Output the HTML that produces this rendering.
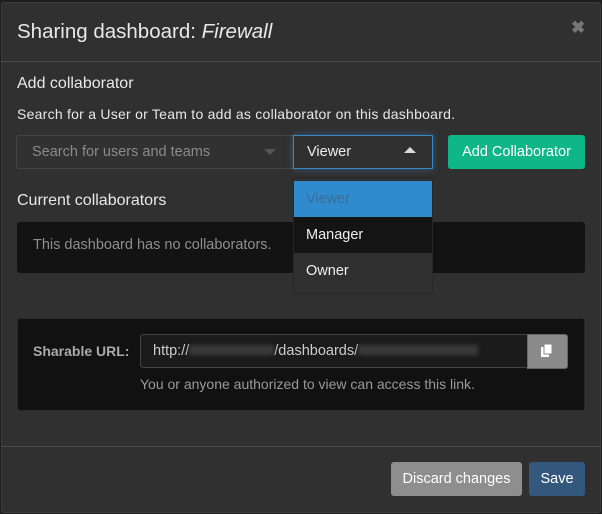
<!DOCTYPE html><html><head><style>
*{box-sizing:border-box;margin:0;padding:0}
body{width:602px;height:514px;background:#1e1e1e;font-family:"Liberation Sans",sans-serif;position:relative;overflow:hidden}
.m{position:absolute;left:1px;top:2px;width:600px;height:511px;background:#303030;border:1px solid #3c3c3c;border-radius:3px}
.a{position:absolute;white-space:nowrap}
.t{color:#e8e8e8}
</style></head><body>
<div class="m"></div>
<div class="a t" style="left:17px;top:20px;font-size:20.5px">Sharing dashboard: <i>Firewall</i></div>
<div class="a" style="left:571px;top:18px;font-size:17px;color:#777;font-weight:bold">✖</div>
<div class="a" style="left:1px;top:61px;width:600px;height:1px;background:#4a4a4a"></div>
<div class="a t" style="left:17px;top:75px;font-size:16px">Add collaborator</div>
<div class="a t" style="left:17px;top:106px;font-size:14px;letter-spacing:0.25px">Search for a User or Team to add as collaborator on this dashboard.</div>
<div class="a" style="left:16px;top:135px;width:278px;height:34px;border:1px solid #444;border-radius:3px 0 0 3px;background:#313131;color:#8a8a8a;font-size:14.5px;padding:8px 0 0 15px">Search for users and teams</div>
<div class="a" style="left:264px;top:149px;width:0;height:0;border-left:6px solid transparent;border-right:6px solid transparent;border-top:6px solid #555"></div>
<div class="a" style="left:293px;top:135px;width:140px;height:34px;border:1px solid #3a87c8;box-shadow:0 0 6px rgba(60,140,210,.5);background:#303030;color:#eee;font-size:14.5px;padding:8px 0 0 13px">Viewer</div>
<div class="a" style="left:404px;top:147px;width:0;height:0;border-left:6px solid transparent;border-right:6px solid transparent;border-bottom:6px solid #ddd"></div>
<div class="a" style="left:448px;top:135px;width:137px;height:34px;background:#0fb688;border-radius:3px;color:#fff;font-size:14.5px;text-align:center;line-height:34px">Add Collaborator</div>
<div class="a t" style="left:17px;top:192px;font-size:16px">Current collaborators</div>
<div class="a" style="left:17px;top:222px;width:568px;height:51px;background:#131313;border-radius:3px;color:#8e8e8e;font-size:14.5px;padding:15px 0 0 16px">This dashboard has no collaborators.</div>
<div class="a" style="left:293px;top:177px;width:140px;height:117px;background:#303030;border:1px solid #282828;border-radius:3px"></div>
<div class="a" style="left:294px;top:181px;width:138px;height:36px;background:#2f8bce;color:#3d6c98;font-size:14.5px;padding:10px 0 0 12px">Viewer</div>
<div class="a" style="left:294px;top:217px;width:138px;height:36px;background:#141414;color:#eee;font-size:14.5px;padding:10px 0 0 12px">Manager</div>
<div class="a" style="left:294px;top:253px;width:138px;height:36px;color:#eee;font-size:14.5px;padding:10px 0 0 12px">Owner</div>
<div class="a" style="left:17px;top:318px;width:568px;height:93px;background:#111;border:1px solid #2a2a2a;border-radius:3px"></div>
<div class="a" style="left:33px;top:343px;color:#aaa;font-size:14px;font-weight:bold">Sharable URL:</div>
<div class="a" style="left:140px;top:334px;width:388px;height:34px;border:1px solid #444;border-radius:3px 0 0 3px;background:#1b1b1b;color:#ccc;font-size:14.5px;padding:8px 0 0 12px">http://<span style="display:inline-block;width:85px;height:10px;background:#3a3a3a;filter:blur(2px)"></span>/dashboards/<span style="display:inline-block;width:120px;height:10px;background:#3a3a3a;filter:blur(2px)"></span></div>
<div class="a" style="left:527px;top:334px;width:41px;height:35px;background:#8a8a8a;border:1px solid #666;border-radius:0 3px 3px 0"></div>
<svg class="a" style="left:540px;top:344px" width="14" height="14" viewBox="0 0 14 14"><rect x="1" y="3" width="8" height="10" fill="#fff"/><rect x="4" y="0" width="8" height="10" fill="#fff" stroke="#8a8a8a" stroke-width="1"/></svg>
<div class="a" style="left:140px;top:376px;color:#999;font-size:14px">You or anyone authorized to view can access this link.</div>
<div class="a" style="left:1px;top:446px;width:600px;height:1px;background:#4a4a4a"></div>
<div class="a" style="left:391px;top:462px;width:131px;height:34px;background:#8e8e8e;border-radius:3px;color:#fff;font-size:14.5px;text-align:center;line-height:34px">Discard changes</div>
<div class="a" style="left:529px;top:462px;width:56px;height:34px;background:#34577e;border-radius:3px;color:#fff;font-size:14.5px;text-align:center;line-height:34px">Save</div>
</body></html>
